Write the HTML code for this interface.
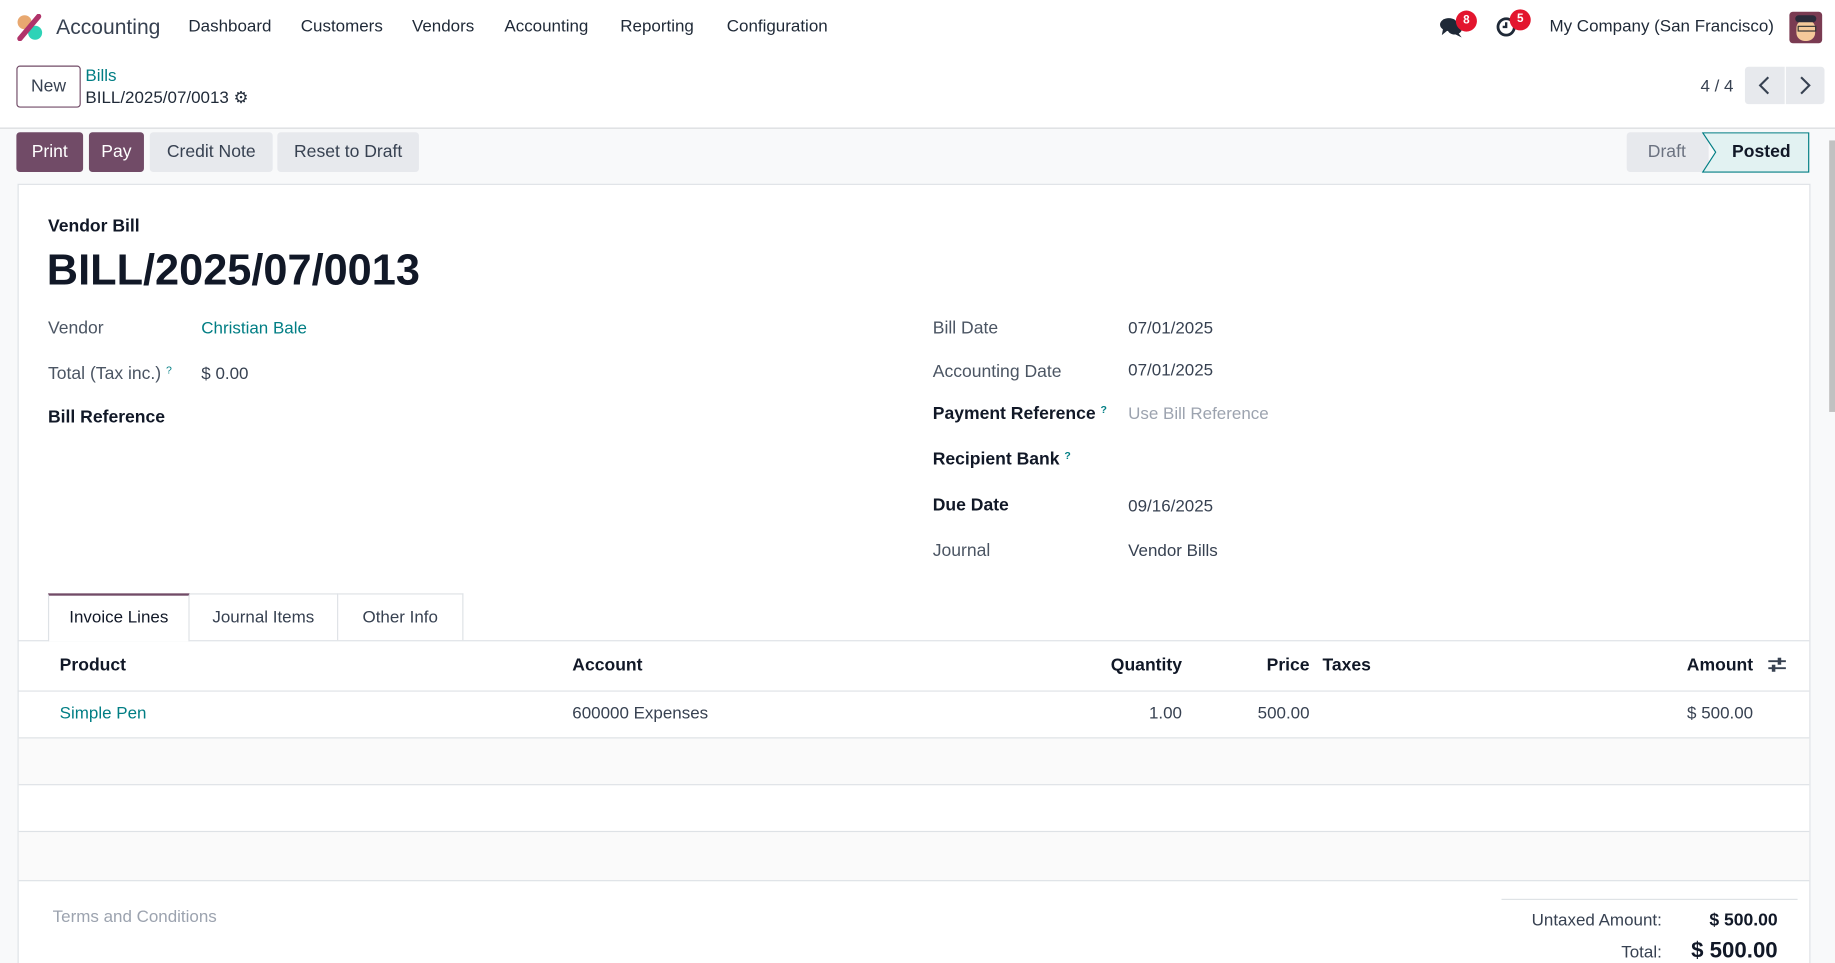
<!DOCTYPE html>
<html><head><meta charset="utf-8"><style>
html,body{margin:0;padding:0;width:1835px;height:963px;overflow:hidden;background:#fff}
#w{position:absolute;left:0;top:0;width:1568px;height:823px;overflow:hidden;transform:scale(1.1703);transform-origin:0 0;font-family:"Liberation Sans",sans-serif;color:#374151;font-size:14.5px}
.a{position:absolute;white-space:nowrap}
.nav{color:#1f2937;font-size:14.5px;top:15px}
.btn{position:absolute;top:113px;height:34px;line-height:34px;border-radius:3px;text-align:center;font-size:15px}
.p{background:#714B67;color:#fff}
.g{background:#e7e9ed;color:#374151}
.lbl{color:#4b5563;font-size:15px}
.b{font-weight:bold;color:#111827}
.q{color:#017E84;font-size:9px;vertical-align:top}
.th{font-weight:bold;color:#111827;top:560px;font-size:15px}
.td{top:602px;font-size:14.5px;color:#374151}
</style></head><body><div id="w">
<svg class="a" style="left:14px;top:12px" width="23" height="23" viewBox="0 0 23 23"><circle cx="7" cy="7" r="6" fill="#e8a870"/><circle cx="16" cy="16" r="6" fill="#2ed3b7"/><path d="M3 21 L19 2" stroke="#b0336a" stroke-width="4.5" stroke-linecap="round"/></svg>
<div class="a" style="left:48px;top:13px;font-size:18px;color:#374151">Accounting</div>
<div class="a nav" style="left:161px">Dashboard</div>
<div class="a nav" style="left:257px">Customers</div>
<div class="a nav" style="left:352px">Vendors</div>
<div class="a nav" style="left:431px">Accounting</div>
<div class="a nav" style="left:530px">Reporting</div>
<div class="a nav" style="left:621px">Configuration</div>
<svg class="a" style="left:1230px;top:14px" width="20" height="18" viewBox="0 0 20 18"><ellipse cx="8" cy="7" rx="7.5" ry="5.5" fill="#1f2937"/><ellipse cx="13" cy="11" rx="6" ry="4.5" fill="#1f2937"/><path d="M3 11 L2 16 L7 12Z M16 14 L19 18 L13 15Z" fill="#1f2937"/></svg>
<div class="a" style="left:1244px;top:9px;width:18px;height:18px;border-radius:9px;background:#e3152e;color:#fff;font-size:10px;text-align:center;line-height:18px;font-weight:bold">8</div>
<svg class="a" style="left:1278px;top:14px" width="18" height="18" viewBox="0 0 18 18"><circle cx="9" cy="9" r="7" fill="none" stroke="#1f2937" stroke-width="2.4"/><path d="M9 5V9H6" stroke="#1f2937" stroke-width="2" fill="none"/></svg>
<div class="a" style="left:1290px;top:8px;width:18px;height:18px;border-radius:9px;background:#e3152e;color:#fff;font-size:10px;text-align:center;line-height:18px;font-weight:bold">5</div>
<div class="a" style="left:1324px;top:15px;font-size:14.5px;color:#1f2937">My Company (San Francisco)</div>
<div class="a" style="left:1529px;top:10px;width:28px;height:27px;border-radius:3px;background:#7a3b52;overflow:hidden"><div style="position:absolute;left:6px;top:7px;width:16px;height:18px;border-radius:7px;background:#f4c99a"></div><div style="position:absolute;left:5px;top:3px;width:18px;height:6px;border-radius:4px;background:#2b2b3a"></div><div style="position:absolute;left:7px;top:12px;width:14px;height:3px;border:1px solid #333"></div></div>
<div class="a" style="left:14px;top:56px;width:53px;height:34px;border:1px solid #714B67;border-radius:3px;text-align:center;line-height:34px;font-size:15px;color:#374151">New</div>
<div class="a" style="left:73px;top:57px;color:#017E84;font-size:14.5px">Bills</div>
<div class="a" style="left:73px;top:75px;color:#1f2937;font-size:14.5px">BILL/2025/07/0013 <span style="font-size:14px">⚙</span></div>
<div class="a" style="left:1453px;top:66px;color:#374151;font-size:14.5px">4 / 4</div>
<div class="a" style="left:1491px;top:57px;width:34px;height:32px;background:#e7e9ed;border-radius:3px 0 0 3px"></div>
<div class="a" style="left:1526px;top:57px;width:33px;height:32px;background:#e7e9ed;border-radius:0 3px 3px 0"></div>
<svg class="a" style="left:1491px;top:57px" width="68" height="32"><path d="M20 9 L13 16 L20 23 M48 9 L55 16 L48 23" stroke="#374151" stroke-width="1.8" fill="none"/></svg>
<div class="a" style="left:0;top:109px;width:1568px;height:714px;background:#f8f9fa;border-top:1px solid #d8dadd"></div>
<div class="btn p" style="left:14px;width:57px">Print</div>
<div class="btn p" style="left:76px;width:47px">Pay</div>
<div class="btn g" style="left:128px;width:105px">Credit Note</div>
<div class="btn g" style="left:237px;width:121px">Reset to Draft</div>
<div class="a" style="left:1390px;top:113px;width:70px;height:34px;background:#e7e9ed;border-radius:3px 0 0 3px;color:#6b7280;line-height:34px;font-size:15px;text-indent:18px">Draft</div>
<svg class="a" style="left:1454px;top:113px" width="93" height="35"><path d="M1 0.5 H91.5 V34 H1 L12 17Z" fill="#e2f2f2" stroke="#017E84" stroke-width="1"/></svg>
<div class="a" style="left:1480px;top:121px;font-size:15px;font-weight:bold;color:#111827">Posted</div>
<div class="a" style="left:1563px;top:120px;width:5px;height:232px;background:#c1c1c1"></div>
<div class="a" style="left:15px;top:157px;width:1530px;height:700px;background:#fff;border:1px solid #dee2e6"></div>
<div class="a b" style="left:41px;top:185px;font-size:15px">Vendor Bill</div>
<div class="a" style="left:40px;top:210px;font-size:37px;font-weight:bold;color:#111827">BILL/2025/07/0013</div>
<div class="a lbl" style="left:41px;top:272px">Vendor</div>
<div class="a" style="left:172px;top:273px;color:#017E84;font-size:14.5px">Christian Bale</div>
<div class="a lbl" style="left:41px;top:311px">Total (Tax inc.) <span class="q">?</span></div>
<div class="a" style="left:172px;top:312px">$ 0.00</div>
<div class="a b" style="left:41px;top:348px;font-size:15px">Bill Reference</div>
<div class="a lbl" style="left:797px;top:272px">Bill Date</div>
<div class="a" style="left:964px;top:273px">07/01/2025</div>
<div class="a lbl" style="left:797px;top:309px">Accounting Date</div>
<div class="a" style="left:964px;top:309px">07/01/2025</div>
<div class="a b" style="left:797px;top:345px;font-size:15px">Payment Reference <span class="q">?</span></div>
<div class="a" style="left:964px;top:346px;color:#9ca3af">Use Bill Reference</div>
<div class="a b" style="left:797px;top:384px;font-size:15px">Recipient Bank <span class="q">?</span></div>
<div class="a b" style="left:797px;top:423px;font-size:15px">Due Date</div>
<div class="a" style="left:964px;top:425px">09/16/2025</div>
<div class="a lbl" style="left:797px;top:462px">Journal</div>
<div class="a" style="left:964px;top:463px">Vendor Bills</div>
<div class="a" style="left:15px;top:547px;width:1531px;height:1px;background:#dee2e6"></div>
<div class="a" style="left:41px;top:507px;width:121px;height:41px;background:#fff;border:1px solid #dee2e6;border-top:2px solid #714B67;border-bottom:none;box-sizing:border-box;text-align:center;line-height:38px;color:#111827">Invoice Lines</div>
<div class="a" style="left:162px;top:507px;width:127px;height:40px;border:1px solid #dee2e6;border-bottom:none;border-left:none;box-sizing:border-box;text-align:center;line-height:40px">Journal Items</div>
<div class="a" style="left:289px;top:507px;width:107px;height:40px;border:1px solid #dee2e6;border-bottom:none;border-left:none;box-sizing:border-box;text-align:center;line-height:40px">Other Info</div>
<div class="a th" style="left:51px">Product</div>
<div class="a th" style="left:489px">Account</div>
<div class="a th" style="right:558px">Quantity</div>
<div class="a th" style="right:449px">Price</div>
<div class="a th" style="left:1130px">Taxes</div>
<div class="a th" style="right:70px">Amount</div>
<svg class="a" style="left:1510px;top:561px" width="17" height="14"><path d="M1 4H16M1 10H16" stroke="#374151" stroke-width="1.6"/><rect x="9" y="1" width="3" height="6" fill="#374151"/><rect x="4" y="7" width="3" height="6" fill="#374151"/></svg>
<div class="a" style="left:15px;top:590px;width:1531px;height:1px;background:#dee2e6"></div>
<div class="a td" style="left:51px;color:#017E84">Simple Pen</div>
<div class="a td" style="left:489px">600000 Expenses</div>
<div class="a td" style="right:558px">1.00</div>
<div class="a td" style="right:449px">500.00</div>
<div class="a td" style="right:70px">$ 500.00</div>
<div class="a" style="left:16px;top:630px;width:1530px;height:40px;background:#fafafa;border-top:1px solid #dee2e6"></div>
<div class="a" style="left:16px;top:670px;width:1530px;height:40px;background:#fff;border-top:1px solid #dee2e6"></div>
<div class="a" style="left:16px;top:710px;width:1530px;height:41px;background:#fafafa;border-top:1px solid #dee2e6;border-bottom:1px solid #dee2e6"></div>
<div class="a" style="left:45px;top:776px;color:#9ca3af">Terms and Conditions</div>
<div class="a" style="left:1283px;top:768px;width:253px;height:1px;background:#dee2e6"></div>
<div class="a" style="right:148px;top:779px;color:#374151">Untaxed Amount:</div>
<div class="a" style="right:49px;top:778px;font-weight:bold;color:#111827;font-size:15px">$ 500.00</div>
<div class="a" style="right:148px;top:806px;color:#374151">Total:</div>
<div class="a" style="right:49px;top:802px;font-weight:bold;color:#111827;font-size:19px">$ 500.00</div>
</div></body></html>
